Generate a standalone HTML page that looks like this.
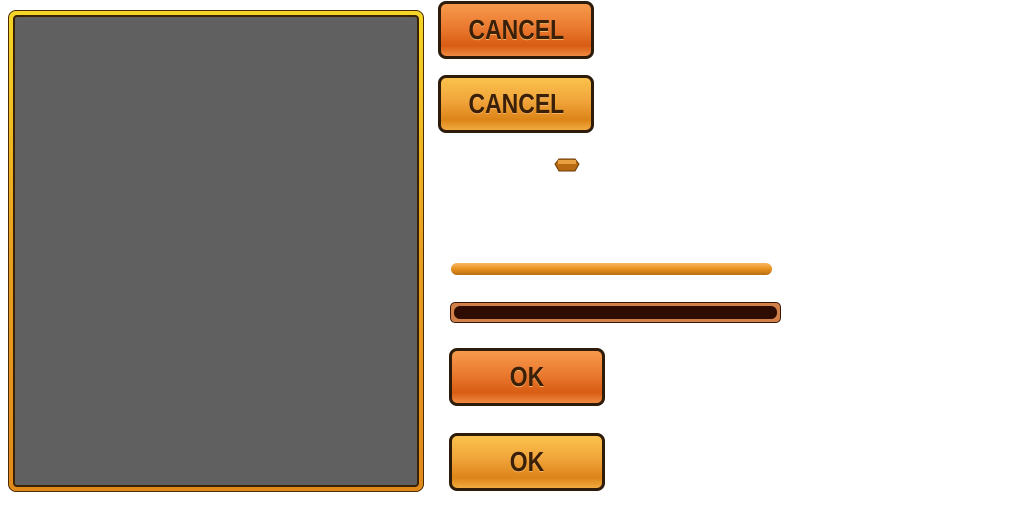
<!DOCTYPE html>
<html><head><style>
body{margin:0;width:1024px;height:512px;background:#fff;position:relative;overflow:hidden;font-family:"Liberation Sans",sans-serif}
.frame{position:absolute;left:8px;top:10px;width:416px;height:482px;border-radius:8px;background:linear-gradient(#f5d626,#e9a020 50%,#e08a1c);border:1px solid #4a2a08;box-sizing:border-box}
.frame .in{position:absolute;left:4px;top:4px;right:4px;bottom:4px;background:#606060;border:2px solid #3a2208;border-radius:4px}
.btn{position:absolute;width:156px;height:58px;box-sizing:border-box;border:3px solid #2e1c0a;border-radius:8px;display:flex;align-items:center;justify-content:center;color:#3a2008;font-size:28px;text-shadow:0 1px 0 #f5b060}
.btn span{display:inline-block;transform:scaleX(0.82);font-family:"Liberation Sans Narrow","Liberation Sans",sans-serif;font-weight:bold}
.o{background:linear-gradient(#f79a4c,#ea7a30 45%,#d85c14 80%,#f08a40)}
.y{background:linear-gradient(#fbc24c,#f0a43a 45%,#dc8418 80%,#f2ab40)}
</style></head><body>
<div class="frame"><div class="in"></div></div>
<div class="btn o" style="left:438px;top:1px"><span>CANCEL</span></div>
<div class="btn y" style="left:438px;top:75px"><span>CANCEL</span></div>
<svg style="position:absolute;left:554px;top:157px" width="26" height="16"><polygon points="5,2 21,2 25,7 21,14 5,14 1,7" fill="#b86a10" stroke="#6a3a08"/><rect x="4" y="3" width="18" height="4" fill="#e8a040"/></svg>
<div style="position:absolute;left:451px;top:263px;width:321px;height:12px;border-radius:6px;background:linear-gradient(#f8b860,#e89020 50%,#b87010)"></div>
<div style="position:absolute;left:450px;top:302px;width:331px;height:21px;box-sizing:border-box;border-radius:5px;background:#d08048;border:1px solid #3a1808;padding:3px"><div style="height:100%;background:#2e0c02;border-radius:6px"></div></div>
<div class="btn o" style="left:449px;top:348px"><span>OK</span></div>
<div class="btn y" style="left:449px;top:433px"><span>OK</span></div>
</body></html>
